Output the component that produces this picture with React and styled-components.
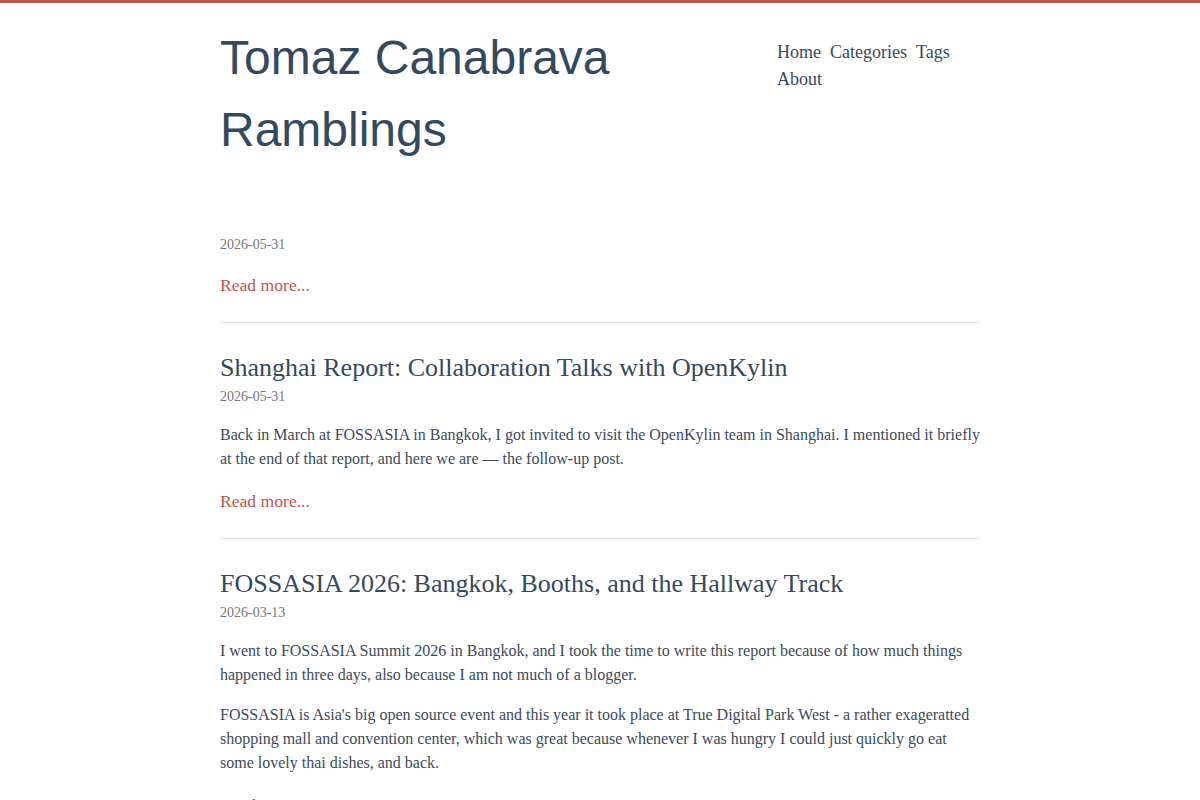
import React from "react"
import styled, { createGlobalStyle } from "styled-components"

const GlobalStyle = createGlobalStyle`
  html, body {
    margin: 0;
    padding: 0;
    background: #ffffff;
  }
  body {
    border-top: 3px solid #c0564b;
    font-family: "Liberation Serif", "Times New Roman", serif;
    color: #34495e;
  }
`

const Page = styled.div`
  width: 760px;
  margin: 0 auto;
`

const Header = styled.header`
  display: flex;
  align-items: flex-start;
  justify-content: space-between;
  padding-top: 19px;
`

const SiteTitle = styled.h1`
  margin: 0;
  font-family: "Liberation Sans", Arial, sans-serif;
  font-weight: 400;
  font-size: 48px;
  line-height: 72px;
  color: #34495e;
  width: 420px;
`

const Nav = styled.nav`
  width: 203px;
  margin-top: 17px;
  display: flex;
  flex-wrap: wrap;
  column-gap: 9px;
`

const NavLink = styled.a`
  font-size: 18px;
  line-height: 27px;
  color: #34495e;
  text-decoration: none;
`

const Main = styled.main`
  padding-top: 68px;
`

const Post = styled.article`
  border-bottom: 1px solid #e3e3e3;
  padding-bottom: 23px;
  margin-bottom: 29px;
`

const PostTitle = styled.h2`
  margin: 0;
  font-weight: 400;
  font-size: 26px;
  line-height: 31px;
  color: #34495e;
`

const PostDate = styled.div`
  font-size: 14px;
  line-height: 21px;
  color: #777777;
  margin-top: ${(p) => (p.$first ? "0" : "3px")};
`

const Para = styled.p`
  margin: 16px 0 0;
  font-size: 16px;
  line-height: 24px;
  color: #3b4a5b;
`

const ReadMore = styled.a`
  display: block;
  margin-top: 17px;
  font-size: 17.6px;
  line-height: 27px;
  color: #c0564b;
  text-decoration: none;
`

const posts = [
  {
    title: "",
    date: "2026-05-31",
    body: [],
  },
  {
    title: "Shanghai Report: Collaboration Talks with OpenKylin",
    date: "2026-05-31",
    body: [
      "Back in March at FOSSASIA in Bangkok, I got invited to visit the OpenKylin team in Shanghai. I mentioned it briefly at the end of that report, and here we are — the follow-up post.",
    ],
  },
  {
    title: "FOSSASIA 2026: Bangkok, Booths, and the Hallway Track",
    date: "2026-03-13",
    body: [
      "I went to FOSSASIA Summit 2026 in Bangkok, and I took the time to write this report because of how much things happened in three days, also because I am not much of a blogger.",
      "FOSSASIA is Asia's big open source event and this year it took place at True Digital Park West - a rather exageratted shopping mall and convention center, which was great because whenever I was hungry I could just quickly go eat some lovely thai dishes, and back.",
    ],
  },
]

const App = () => {
  return (
    <>
      <GlobalStyle />
      <Page>
        <Header>
          <SiteTitle>Tomaz Canabrava Ramblings</SiteTitle>
          <Nav>
            <NavLink href="#">Home</NavLink>
            <NavLink href="#">Categories</NavLink>
            <NavLink href="#">Tags</NavLink>
            <NavLink href="#">About</NavLink>
          </Nav>
        </Header>
        <Main>
          {posts.map((post, i) => (
            <Post key={i}>
              {post.title && <PostTitle>{post.title}</PostTitle>}
              <PostDate $first={!post.title}>{post.date}</PostDate>
              {post.body.map((text, j) => (
                <Para key={j}>{text}</Para>
              ))}
              <ReadMore href="#">Read more...</ReadMore>
            </Post>
          ))}
        </Main>
      </Page>
    </>
  )
}

export default App
